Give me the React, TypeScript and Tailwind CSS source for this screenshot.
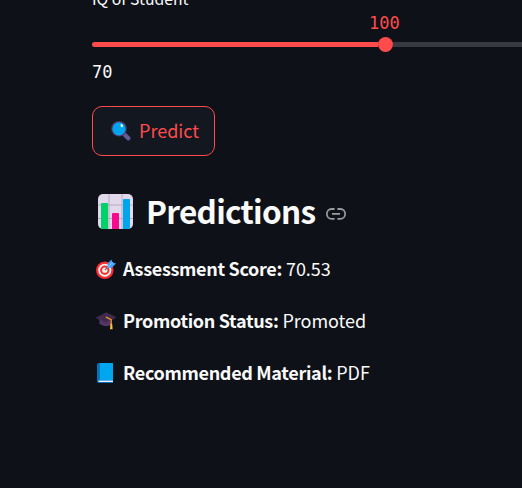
import type { ReactNode } from "react";

function Magnifier() {
  return (
    <svg width="20" height="20" viewBox="0 0 20 20" className="shrink-0">
      <path d="M12.5 12.5L17.3 17.3" stroke="#635994" strokeWidth="4.4" strokeLinecap="round" />
      <path d="M10.8 10.8L13 13" stroke="#433b6b" strokeWidth="2.6" />
      <circle cx="8" cy="7.8" r="7.8" fill="#533566" />
      <circle cx="8" cy="7.8" r="6.6" fill="#00a6ed" />
      <ellipse cx="10.7" cy="4.6" rx="1.1" ry="1.7" fill="#fff" transform="rotate(-20 10.7 4.6)" />
    </svg>
  );
}

function BarChart() {
  return (
    <svg width="35" height="35" viewBox="0 0 35 35" className="shrink-0">
      <rect width="35" height="35" rx="5" fill="#e1d8ec" />
      <path d="M11 0V35M24 0V35M0 11H35M0 24.5H35" stroke="#b4acbc" strokeWidth="1" />
      <path d="M3 10a1 1 0 0 1 1-1h5a1 1 0 0 1 1 1V35H5q-2 0-2-1Z" fill="#00d26a" />
      <path d="M14 20a1 1 0 0 1 1-1h5a1 1 0 0 1 1 1V35H14Z" fill="#f70a8d" />
      <path d="M25 6a1 1 0 0 1 1-1h5a1 1 0 0 1 1 1V34q-1 1-2 1H25Z" fill="#00a6ed" />
    </svg>
  );
}

function Target() {
  return (
    <svg width="20" height="20" viewBox="0 0 20 20">
      <circle cx="8.8" cy="11.2" r="8.8" fill="#ca0b4a" />
      <circle cx="8.8" cy="11.2" r="8.5" fill="#f8312f" />
      <circle cx="8.8" cy="11.2" r="6.5" fill="#f4f4f4" />
      <circle cx="8.8" cy="11.2" r="4.7" fill="#f8312f" />
      <circle cx="8.8" cy="11.2" r="2.6" fill="#f4f4f4" />
      <path d="M8.8 11.2L16 4" stroke="#8c5543" strokeWidth="1.1" />
      <path d="M11.2 9.2L11.8 4.5L15.4 .6L16.4 3.5L20 4.5L16 8.6Z" fill="#46a4fb" />
      <path d="M12 8.2L17 3.1" stroke="#83cbff" strokeWidth="1" />
    </svg>
  );
}

function GraduationCap() {
  return (
    <svg width="20" height="20" viewBox="0 0 20 20">
      <path d="M3.4 7V12.2C5 15 12.5 16.8 15.3 13V7Z" fill="#533566" />
      <path d="M0 6.4L10.2 1.2L19.8 6L9.9 11.7Z" fill="#402a4d" />
      <path d="M0 6.4V7.1L9.9 12.4L19.8 6.7V6L9.9 11.7Z" fill="#533566" />
      <path d="M9.8 6L15.2 8.7V14" fill="none" stroke="#f9a01b" strokeWidth="1.2" />
      <path d="M14.4 12.7h1.8l.4 5.6h-2.6Z" fill="#f9c23c" />
    </svg>
  );
}

function Book() {
  return (
    <svg width="20" height="20" viewBox="0 0 20 20">
      <path d="M1 1.5Q1 0 3 0H17V20H2.5Q1 20 1 18Z" fill="#0074ba" />
      <path d="M2.4 17.4H17V19H3.2Q2 18.6 2.4 17.4Z" fill="#f3eef8" />
      <path d="M3.6 0H17V17.2H3.6Z" fill="#00a6ed" />
      <path d="M3.4 0V17.2" stroke="#0074ba" strokeWidth=".8" />
    </svg>
  );
}

function LinkIcon() {
  return (
    <svg width="20" height="12" viewBox="0 0 21 12" preserveAspectRatio="none" fill="none" stroke="#9c9da0" strokeWidth="1.8">
      <path d="M9 1H5.8a4.8 4.8 0 0 0 0 9.8H9M12 1h3.2a4.8 4.8 0 0 1 0 9.8H12M6.3 5.9h8.4" />
    </svg>
  );
}

function ResultRow({ icon, label, value }: { icon: ReactNode; label: string; value: string }) {
  return (
    <p className="flex h-[30px] items-center text-[18px] leading-[30px] whitespace-nowrap">
      <span className="mt-[2px] mr-[7px] ml-1 shrink-0">{icon}</span>
      <strong className="font-bold tracking-[-0.32px]">{label}</strong>
      <span className="ml-1 tracking-[-0.05px]">{value}</span>
    </p>
  );
}

export default function App() {
  return (
    <main className="h-[488px] w-[522px] overflow-hidden bg-[#0e1117] pl-[92px] font-['Noto_Sans_CJK_SC',sans-serif] text-[#fafafa]">
      <div className="-mt-[14px] h-[27px] text-[15.75px] leading-[26px]">IQ of Student</div>
      <div className="ml-[277px] h-5 font-['DejaVu_Sans_Mono',monospace] text-[17px] leading-5 text-[#ff4b4b]">100</div>
      <div className="mt-1 flex h-[15px] items-center">
        <div className="h-[5px] w-[286px] rounded-l-full bg-[#ff4b4b]" />
        <div className="size-[15px] shrink-0 rounded-full bg-[#ff4b4b]" />
        <div className="h-[5px] flex-1 bg-[#373a41]" />
      </div>
      <div className="mt-[10px] h-5 font-['DejaVu_Sans_Mono',monospace] text-[17px] leading-5">70</div>
      <button className="mt-[24px] flex h-[50px] w-[123px] items-center gap-2 rounded-[10px] border border-[#ff4b4b] bg-[#131720] pl-[18px] text-[18px] text-[#ff4b4b]">
        <Magnifier />
        <span className="-mt-[2px]">Predict</span>
      </button>
      <h2 className="mt-[30px] flex h-[50px] items-center pl-[6px] text-[31.5px] leading-[50px] font-bold">
        <BarChart />
        <span className="-mt-[2px] ml-[13px] tracking-[-0.7px]">Predictions</span>
        <span className="mt-[6px] ml-[11px]"><LinkIcon /></span>
      </h2>
      <section className="mt-[17px] flex flex-col gap-[22px]">
        <ResultRow icon={<Target />} label="Assessment Score:" value="70.53" />
        <ResultRow icon={<GraduationCap />} label="Promotion Status:" value="Promoted" />
        <ResultRow icon={<Book />} label="Recommended Material:" value="PDF" />
      </section>
    </main>
  );
}
